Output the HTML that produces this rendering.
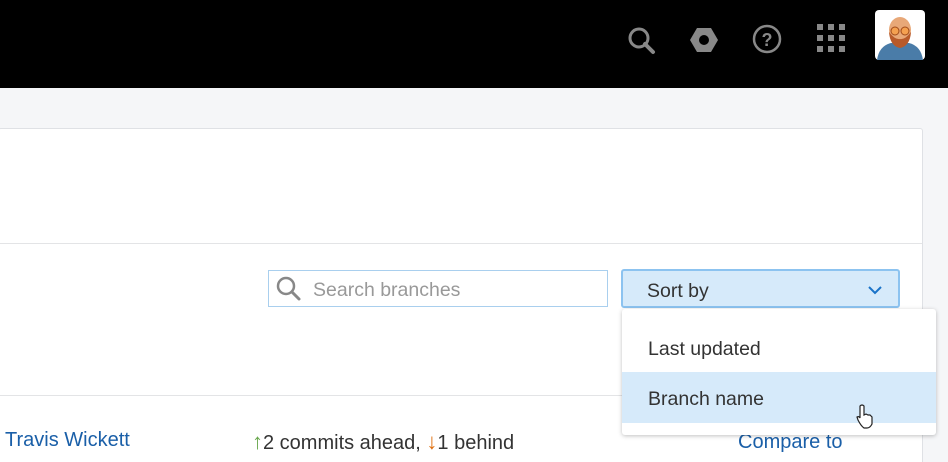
<!DOCTYPE html>
<html><head><style>
*{margin:0;padding:0;box-sizing:border-box}
html,body{width:948px;height:462px;overflow:hidden}
body{background:#f5f6f8;font-family:"Liberation Sans",sans-serif;position:relative}
.hdr{position:absolute;left:0;top:0;width:948px;height:88px;background:#000}
.card{position:absolute;left:-2px;top:128px;width:925px;height:340px;background:#fff;border:1px solid #dfe1e5;border-radius:3px}
.line{position:absolute;left:0;width:923px;height:1px;background:#e3e4e6}
.t{position:absolute;font-size:19.5px;white-space:nowrap}
</style></head><body>
<div class="hdr">
<svg style="position:absolute;left:620px;top:20px" width="300" height="44">
<circle cx="19" cy="18" r="9" fill="none" stroke="#888" stroke-width="3"/>
<line x1="25" y1="24" x2="33" y2="32" stroke="#888" stroke-width="4" stroke-linecap="round"/>
<polygon points="77,8 91,8 98,20 91,32 77,32 70,20" fill="#888"/>
<circle cx="84" cy="20" r="5" fill="#000"/>
<circle cx="147" cy="19" r="13" fill="none" stroke="#888" stroke-width="2.5"/>
<text x="147" y="26" font-size="18" font-family="Liberation Sans" fill="#888" text-anchor="middle" font-weight="bold">?</text>
<g fill="#888"><rect x="197" y="4" width="6" height="6"/><rect x="208" y="4" width="6" height="6"/><rect x="219" y="4" width="6" height="6"/><rect x="197" y="15" width="6" height="6"/><rect x="208" y="15" width="6" height="6"/><rect x="219" y="15" width="6" height="6"/><rect x="197" y="26" width="6" height="6"/><rect x="208" y="26" width="6" height="6"/><rect x="219" y="26" width="6" height="6"/></g>
</svg>
<svg style="position:absolute;left:875px;top:10px" width="50" height="50">
<rect width="50" height="50" rx="4" fill="#fff"/>
<path d="M2,50 Q4,36 16,33 L34,33 Q46,36 48,50Z" fill="#4a7ca8"/>
<ellipse cx="25" cy="20" rx="11" ry="13" fill="#e8a878"/>
<path d="M14,22 Q15,36 25,38 Q35,36 36,22 Q30,30 25,29 Q20,30 14,22Z" fill="#b85a2a"/>
<circle cx="20" cy="21" r="4" fill="#f4a050" stroke="#a04a1a"/><circle cx="30" cy="21" r="4" fill="#f4a050" stroke="#a04a1a"/>
</svg>
</div>
<div class="card">
<div class="line" style="top:114px"></div>
<div class="line" style="top:266px"></div>
</div>
<div style="position:absolute;left:268px;top:270px;width:340px;height:37px;border:1px solid #a9cfee;background:#fff"></div>
<svg style="position:absolute;left:276px;top:276px" width="26" height="26"><circle cx="10" cy="10" r="8" fill="none" stroke="#888" stroke-width="2.5"/><line x1="16" y1="16" x2="23" y2="23" stroke="#888" stroke-width="3" stroke-linecap="round"/></svg>
<div class="t" style="left:313px;top:279px;color:#999">Search branches</div>
<div style="position:absolute;left:621px;top:269px;width:279px;height:39px;border:2px solid #8cc3f0;border-radius:3px;background:#d6eafa"></div>
<div class="t" style="left:647px;top:280px;color:#333">Sort by</div>
<svg style="position:absolute;left:868px;top:285px" width="14" height="10"><path d="M1,2 L7,8 L13,2" fill="none" stroke="#1a73c8" stroke-width="2"/></svg>
<div class="t" style="left:5px;top:429px;color:#1a5fa8;font-size:20px">Travis Wickett</div>
<div class="t" style="left:252px;top:429px;color:#333;font-size:20px"><span style="color:#6aa84f;font-weight:bold;font-size:22px">↑</span>2 commits ahead, <span style="color:#e07010;font-weight:bold;font-size:22px">↓</span>1 behind</div>
<div class="t" style="left:738px;top:431px;color:#1a5fa8;font-size:20px">Compare to</div>
<div style="position:absolute;left:622px;top:309px;width:314px;height:126px;background:#fff;border-radius:3px;box-shadow:0 1px 4px rgba(0,0,0,.25)"></div>
<div style="position:absolute;left:622px;top:372px;width:314px;height:51px;background:#d6eafa"></div>
<div class="t" style="left:648px;top:338px;color:#333">Last updated</div>
<div class="t" style="left:648px;top:388px;color:#333">Branch name</div>
<svg style="position:absolute;left:855px;top:404px" width="20" height="26"><path d="M5,2 Q7,0 9,2 L9,11 L11,10 L13,11 L15,11 L17,13 L17,20 Q15,24 12,24 L9,24 Q6,22 3,16 L2,13 Q4,12 5,14Z" fill="#fff" stroke="#222" stroke-width="1.2"/></svg>
</body></html>
